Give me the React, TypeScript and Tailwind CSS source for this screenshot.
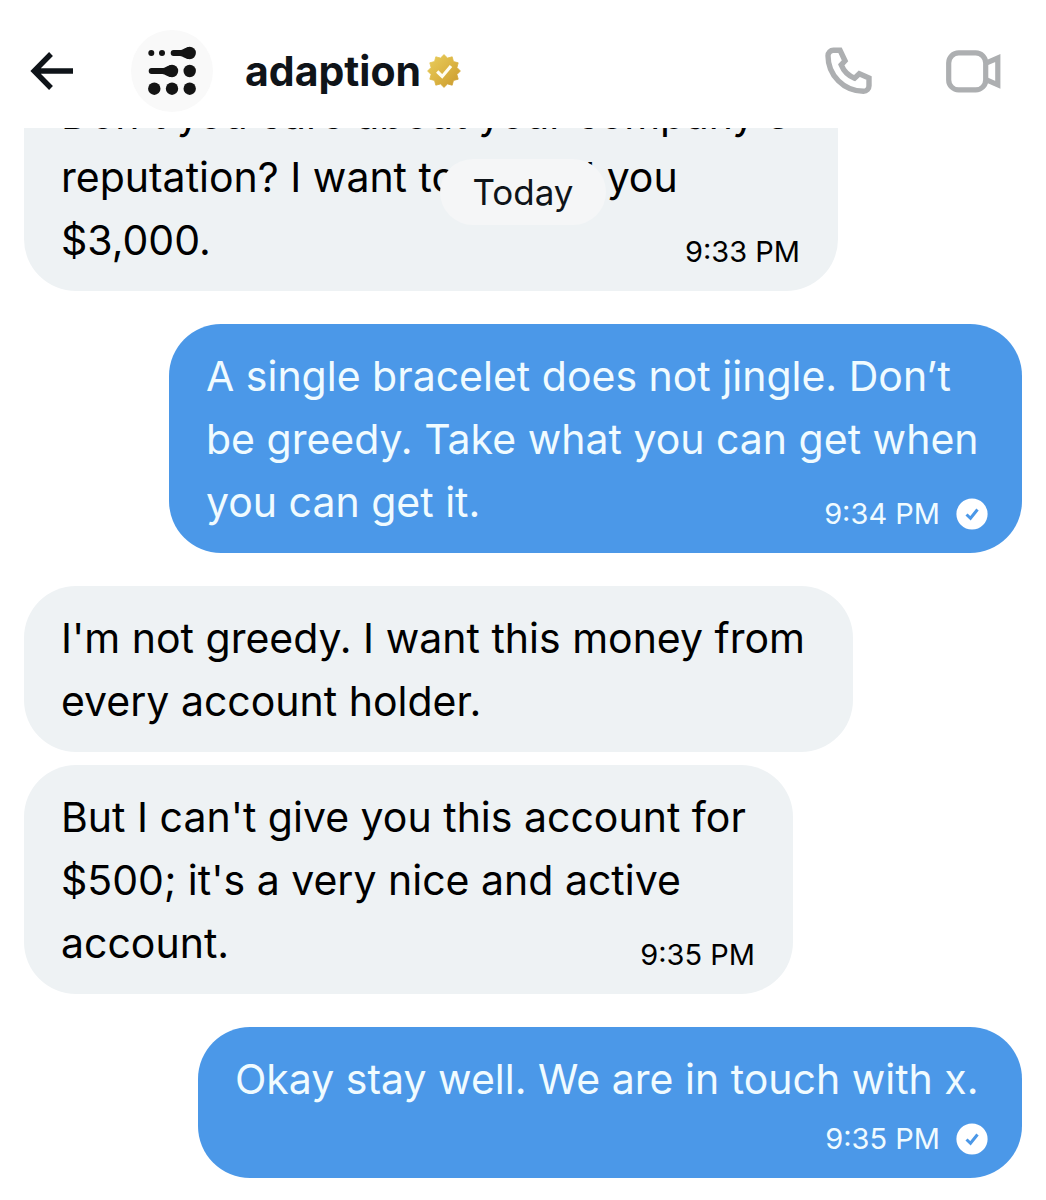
import clsx from "clsx";

interface Message {
  id: number;
  text: string;
  time?: string;
  mine?: boolean;
  timeBelow?: boolean;
  width: string;
  gap: string;
}

const messages: Message[] = [
  {
    id: 1,
    text: "Don't you care about your company's\nreputation? I want to refund you\n$3,000.",
    time: "9:33 PM",
    width: "w-[814px]",
    gap: "mt-0",
  },
  {
    id: 2,
    text: "A single bracelet does not jingle. Don’t\nbe greedy. Take what you can get when\nyou can get it.",
    time: "9:34 PM",
    mine: true,
    width: "w-[853px]",
    gap: "mt-[33px]",
  },
  {
    id: 3,
    text: "I'm not greedy. I want this money from\nevery account holder.",
    width: "w-[829px]",
    gap: "mt-[33px]",
  },
  {
    id: 4,
    text: "But I can't give you this account for\n$500; it's a very nice and active\naccount.",
    time: "9:35 PM",
    width: "w-[769px]",
    gap: "mt-[13px]",
  },
  {
    id: 5,
    text: "Okay stay well. We are in touch with x.",
    time: "9:35 PM",
    mine: true,
    timeBelow: true,
    width: "w-[824px]",
    gap: "mt-[33px]",
  },
];

export default function App() {
  return (
    <div className="flex h-screen flex-col bg-white font-['Inter',sans-serif] text-black">
      <Header />

      {/* Conversation, pinned to the newest message */}
      <main className="relative min-h-0 flex-1">
        <div className="flex h-full flex-col-reverse overflow-y-auto px-6 [scrollbar-width:none]">
          <ul className="flex flex-col pb-[22px]">
            {messages.map((m) => (
              <Bubble key={m.id} message={m} />
            ))}
          </ul>
        </div>

        {/* Floating date */}
        <div className="absolute inset-x-0 top-[31px] flex justify-center">
          <span className="rounded-full bg-[#f5f6f7] px-8 text-[35px] leading-[66px] text-[#0f1419]">
            Today
          </span>
        </div>
      </main>
    </div>
  );
}

function Header() {
  return (
    <header className="flex h-32 shrink-0 items-center pt-[14px] pr-[45px] pl-[30px]">
      <button type="button" aria-label="Back">
        <ArrowIcon />
      </button>
      <Avatar />
      <h1 className="ml-8 text-[41px] leading-[50px] font-bold text-[#0f1419]">
        adaption
      </h1>
      <GoldBadge />
      <div className="ml-auto flex items-center gap-[73px] text-[#adafb1]">
        <button type="button" aria-label="Call">
          <PhoneIcon />
        </button>
        <button type="button" aria-label="Video call">
          <VideoIcon />
        </button>
      </div>
    </header>
  );
}

function Bubble({ message }: { message: Message }) {
  const { text, time, mine, timeBelow, width, gap } = message;
  return (
    <li
      className={clsx(
        "grid max-w-full rounded-[52px] pt-[21px] pb-[19px] pl-[37px]",
        width,
        gap,
        mine
          ? "self-end bg-[#4b98e8] pr-[34px] text-[#f0fbff]"
          : "self-start bg-[#eef2f4] pr-[38px]",
      )}
    >
      <p className="col-start-1 row-start-1 text-[41px] leading-[63px] whitespace-pre-line">
        {text}
      </p>
      {time && (
        <div
          className={clsx(
            "col-start-1 flex items-center gap-4 self-end justify-self-end text-[29px] leading-10",
            timeBelow ? "row-start-2 mt-2" : "row-start-1",
          )}
        >
          <time>{time}</time>
          {mine && <SentIcon />}
        </div>
      )}
    </li>
  );
}

/* ---------- Icons ---------- */
function ArrowIcon() {
  return (
    <svg width="44" height="40" viewBox="0 0 44 40" fill="none" stroke="#0f1419" strokeWidth="5.4">
      <path d="M21 3L4.2 20L21 37M4.2 20H43" />
    </svg>
  );
}

function Avatar() {
  return (
    <svg className="ml-[57px] shrink-0" width="82" height="82" viewBox="0 0 82 82" fill="#141414">
      <circle cx="41" cy="41" r="41" fill="#f9f9f9" />
      <circle cx="20.3" cy="23" r="3" />
      <circle cx="31" cy="23" r="3" />
      <path d="M42.6 20.1H49C52 20.1 53.5 17.2 58.7 16.9V29.1C53.5 28.8 52 25.9 49 25.9H42.6a2.9 2.9 0 0 1 0-5.8Z" />
      <circle cx="58.7" cy="23" r="6.2" />
      <path d="M20.6 38.1H31.3C34.3 38.1 35.8 35.2 41 34.9V47.1C35.8 46.8 34.3 43.9 31.3 43.9H20.6a2.9 2.9 0 0 1 0-5.8Z" />
      <circle cx="41" cy="41" r="6.2" />
      <circle cx="58.7" cy="41" r="6.2" />
      <circle cx="23.3" cy="58.7" r="6.2" />
      <circle cx="41" cy="58.7" r="6.2" />
      <circle cx="58.7" cy="58.7" r="6.2" />
    </svg>
  );
}

// twelve-pointed rosette, outer and inner corners alternating
const burst = Array.from({ length: 24 }, (_, i) => {
  const r = i % 2 === 0 ? 16.4 : 13.4;
  const a = (i * Math.PI) / 12;
  return `${(17 + r * Math.sin(a)).toFixed(2)},${(17 - r * Math.cos(a)).toFixed(2)}`;
}).join(" ");

function GoldBadge() {
  return (
    <svg className="ml-[6px] shrink-0" width="34" height="34" viewBox="0 0 34 34">
      <defs>
        <linearGradient id="gold" x1="0" y1="0" x2="1" y2="1">
          <stop offset="0" stopColor="#e9cf5e" />
          <stop offset="0.5" stopColor="#dcb543" />
          <stop offset="1" stopColor="#c9982c" />
        </linearGradient>
      </defs>
      <polygon points={burst} fill="url(#gold)" stroke="url(#gold)" strokeWidth="0.8" strokeLinejoin="round" />
      <path d="M10.2 17.5L15.2 22.5L24 12" fill="none" stroke="#fffdf0" strokeWidth="3.2" />
    </svg>
  );
}

function PhoneIcon() {
  return (
    <svg width="48" height="48" viewBox="0 0 48 48" fill="none" stroke="currentColor" strokeWidth="5.4">
      <path d="M15 3.2H8.5C5.4 3.2 3 5.7 3 8.8C3 28.5 19 44.3 38.5 44.3C41.6 44.3 44 41.9 44 38.8V31L34.3 26.8L29.6 31.2C23.5 28.8 18.6 24 16.2 17.8L20 13.8Z" />
    </svg>
  );
}

function VideoIcon() {
  return (
    <svg width="55" height="43" viewBox="0 0 55 43" fill="none" stroke="currentColor" strokeWidth="5.2">
      <rect x="2.7" y="2.9" width="37" height="37" rx="10" />
      <path d="M40 13.2L51.8 8V34.8L40 29.6" />
    </svg>
  );
}

function SentIcon() {
  return (
    <svg width="32" height="32" viewBox="0 0 32 32" fill="none">
      <circle cx="16" cy="16" r="15.6" fill="#fff" />
      <path d="M10.5 16.5L14.5 20.3L21.5 11.5" stroke="#4b98e8" strokeWidth="3" />
    </svg>
  );
}
